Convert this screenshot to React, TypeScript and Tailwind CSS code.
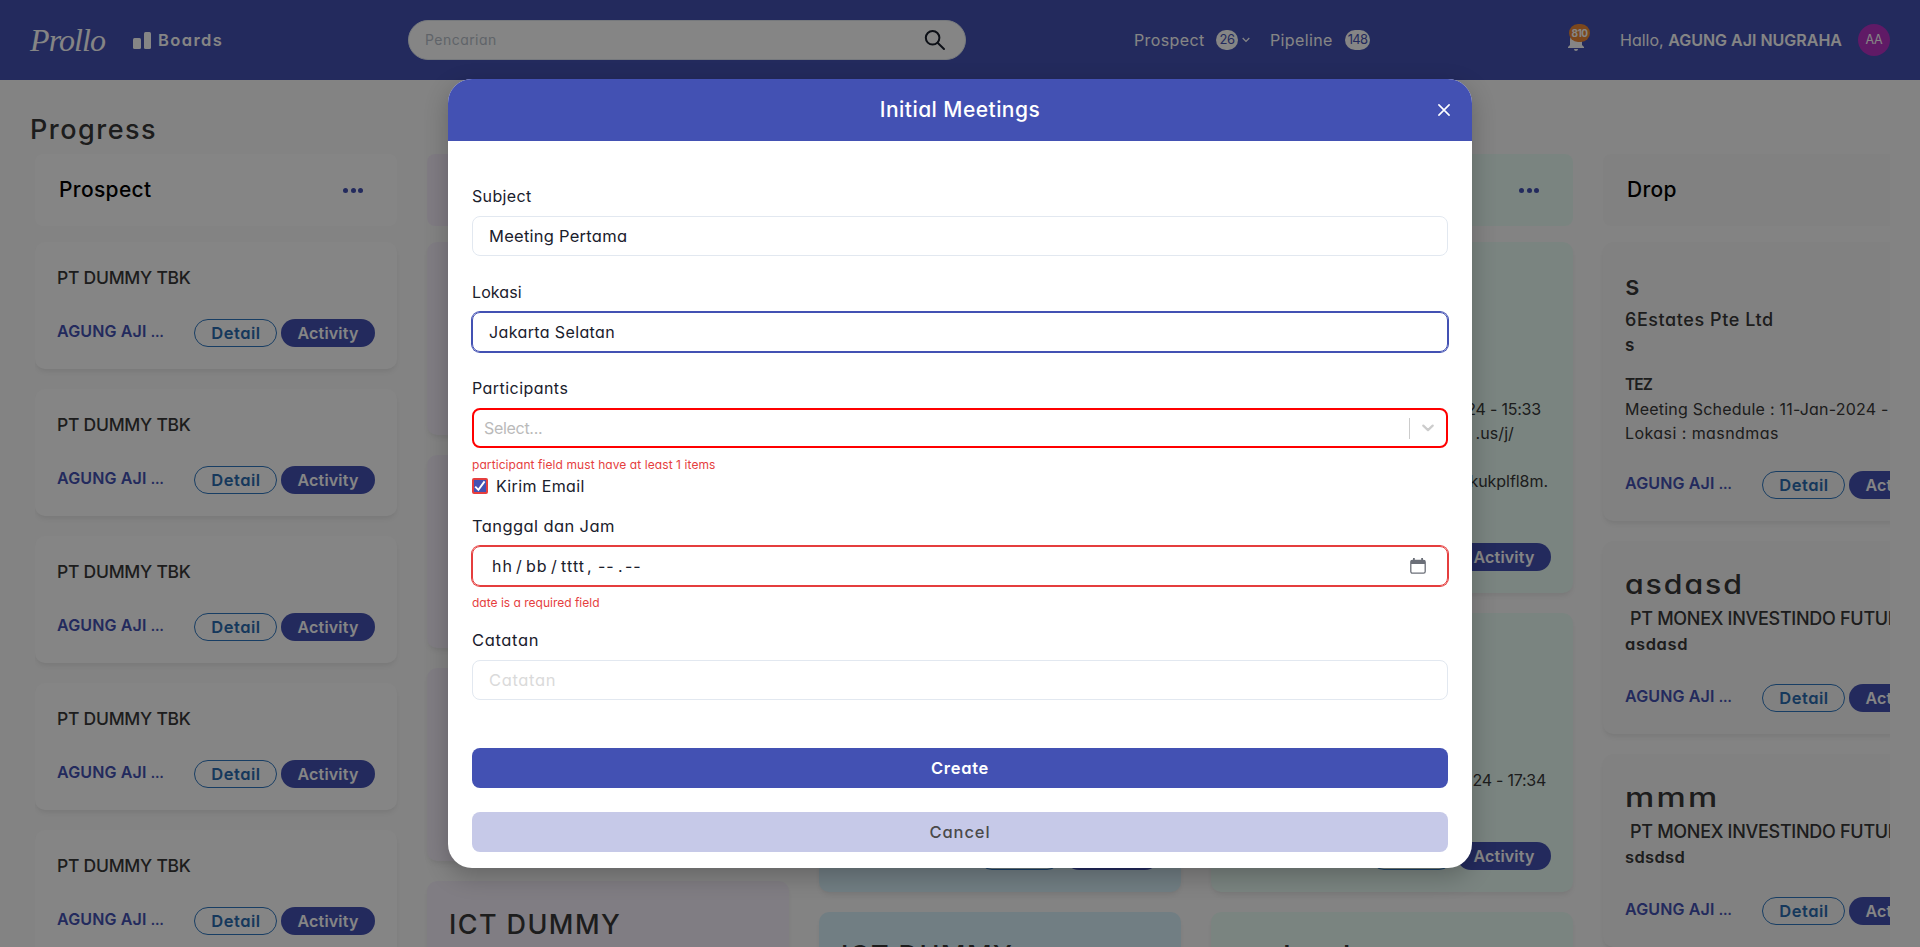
import type { ReactNode } from "react";
import { MdNotifications } from "react-icons/md";

function Actions({ className = "" }: { className?: string }) {
  return (
    <div className={`flex h-7 w-[318px] shrink-0 items-start ${className}`}>
      <p className="w-[137px] text-base leading-6 font-semibold tracking-[0.14px] text-[#4351b3]">
        AGUNG AJI <span className="text-[13px] font-bold tracking-[-0.5px]">…</span>
      </p>
      <div className="flex shrink-0 gap-1">
        <span className="flex h-7 w-[83px] items-center justify-center rounded-full border border-[#2f77c0] pl-px text-[16.5px] font-semibold tracking-[0.5px] text-[#2b6cb0]">
          Detail
        </span>
        <span className="flex h-7 w-[94px] items-center justify-center rounded-full bg-[#4351b3] text-base font-semibold tracking-[0.18px] text-white">
          Activity
        </span>
      </div>
    </div>
  );
}

function Card({ className, children }: { className: string; children?: ReactNode }) {
  return (
    <div
      className={`flex w-[362px] shrink-0 flex-col rounded-[10px] p-[22px] shadow-[0_4px_6px_-1px_rgba(0,0,0,0.07),0_2px_4px_-1px_rgba(0,0,0,0.03)] ${className}`}
    >
      {children}
    </div>
  );
}

function Column({
  title,
  tone,
  children,
}: {
  title?: string;
  tone: string;
  children: ReactNode;
}) {
  return (
    <section className="flex w-[362px] shrink-0 flex-col">
      <header
        className={`mb-4 flex h-[72px] items-center justify-between rounded-lg pr-[34px] pl-6 ${tone}`}
      >
        <h2 className="text-[21px] font-medium tracking-[0.35px] text-black">{title}</h2>
        <span className="flex gap-[2.5px]">
          <i className="size-[5px] rounded-full bg-[#4351b3]" />
          <i className="size-[5px] rounded-full bg-[#4351b3]" />
          <i className="size-[5px] rounded-full bg-[#4351b3]" />
        </span>
      </header>
      <div className="flex flex-col gap-5">{children}</div>
    </section>
  );
}

function BigTitle({ children, className = "tracking-[1.4px]" }: { children: string; className?: string }) {
  return (
    <h3 className={`h-[42px] pt-px text-[27px] leading-[42px] font-medium whitespace-nowrap ${className}`}>
      {children}
    </h3>
  );
}

function Navbar() {
  return (
    <nav className="flex h-20 shrink-0 items-center bg-[#4351b3] pr-[30px] pl-[30px] text-white">
      <div className="flex w-[378px] items-center">
        <span className="w-[103px] font-['Liberation_Serif',serif] text-[32px] leading-none tracking-[-0.9px] italic">
          Prollo
        </span>
        <span className="flex items-end gap-[3px]">
          <i className="h-[11px] w-[7.5px] rounded-[1.5px] bg-white" />
          <i className="h-[17px] w-[7.5px] rounded-[1.5px] bg-white" />
        </span>
        <span className="ml-[7px] text-[16.5px] font-semibold tracking-[1.4px]">Boards</span>
      </div>
      <div className="flex h-10 w-[558px] items-center justify-between rounded-full border border-[#e2e8f0] bg-white pr-[19px] pl-4">
        <span className="text-sm tracking-[0.46px] text-[#b8bfca]">Pencarian</span>
        <svg width="22" height="22" viewBox="0 0 22 22" fill="none" stroke="#1a202c" strokeWidth="2" strokeLinecap="round">
          <circle cx="8.6" cy="8.8" r="6.8" />
          <path d="M13.6 13.8 20 20" />
        </svg>
      </div>
      <div className="ml-[168px] flex items-center">
        <span className="w-[82px] text-base tracking-[0.39px]">Prospect</span>
        <span className="flex h-5 w-[22px] items-center justify-center rounded-full bg-white text-[13px] tracking-[-0.4px] text-[#4351b3]">
          26
        </span>
        <svg className="ml-1 w-2" viewBox="0 0 8 6" fill="none" stroke="currentColor" strokeWidth="1.3">
          <path d="M.7 1 4 4.4 7.3 1" />
        </svg>
        <span className="ml-[20px] w-[75px] text-base tracking-[0.37px]">Pipeline</span>
        <span className="flex h-5 w-[25px] items-center justify-center rounded-full bg-white text-[13px] tracking-[-0.7px] text-[#4351b3]">
          148
        </span>
      </div>
      <div className="ml-auto flex items-center">
        <span className="relative mr-[32px] h-8 w-6 pt-[5px]">
          <MdNotifications size={24} />
          <b className="absolute top-0 left-[5px] flex h-[17.5px] w-[21px] items-center justify-center rounded-full bg-[#ed8936] text-[10px] leading-none font-bold tracking-[-0.5px]">
            810
          </b>
        </span>
        <span className="text-base">
          Hallo, <b className="font-semibold">AGUNG AJI NUGRAHA</b>
        </span>
        <span className="ml-4 flex size-8 items-center justify-center rounded-full bg-[#b832c4] text-[12.5px] tracking-[-0.3px]">
          AA
        </span>
      </div>
    </nav>
  );
}

const prospects = [0, 1, 2, 3, 4];

function Board() {
  return (
    <main className="flex flex-col overflow-hidden text-[#383838]">
      <h1 className="mt-[30px] ml-[30px] h-10 text-[27px] leading-10 font-medium tracking-[1.5px]">Progress</h1>
      <div className="mt-[4px] mr-[30px] ml-[35px] flex h-[793px] items-start gap-[30px] overflow-x-clip">
        <Column title="Prospect" tone="bg-white">
          {prospects.map((id) => (
            <Card key={id} className="h-[127px] bg-white">
              <p className="mb-7 h-[27px] text-[17.5px] leading-[27px] font-medium tracking-[-0.25px]">PT DUMMY TBK</p>
              <Actions />
            </Card>
          ))}
        </Column>
        <Column tone="bg-[#f5eefc]">
          <Card className="h-[193px] bg-[#f5f0fb]" />
          <Card className="h-[193px] bg-[#f5f0fb]" />
          <Card className="h-[193px] bg-[#f5f0fb]" />
          <Card className="h-[193px] bg-[#f5f0fb]">
            <BigTitle>ICT DUMMY</BigTitle>
          </Card>
        </Column>
        <Column tone="bg-[#d9f1fb]">
          <Card className="h-[351px] bg-[#d9f1fb]" />
          <Card className="h-[279px] justify-end bg-[#d9f1fb]">
            <Actions />
          </Card>
          <Card className="h-[193px] bg-[#d9f1fb]">
            <BigTitle>ICT DUMMY</BigTitle>
          </Card>
        </Column>
        <Column tone="bg-[#eafdf5]">
          <Card className="h-[351px] justify-end bg-[#eafdf5]">
            <div className="mb-[50px] text-base leading-6 tracking-[-0.2px]">
              <p className="w-[308px] text-right">24 - 15:33</p>
              <p className="w-[281px] text-right tracking-[0.1px]">.us/j/</p>
              <p className="mt-6 w-[315px] text-right tracking-[-0.05px]">kukplfl8m.</p>
            </div>
            <Actions />
          </Card>
          <Card className="h-[279px] justify-end bg-[#eafdf5]">
            <p className="mb-[50px] w-[313px] text-right text-base leading-6 tracking-[-0.25px]">24 - 17:34</p>
            <Actions />
          </Card>
          <Card className="h-[193px] bg-[#eafdf5]">
            <BigTitle className="w-fit origin-left scale-x-[1.12] tracking-[1.8px]">asdasd</BigTitle>
          </Card>
        </Column>
        <Column title="Drop" tone="bg-[#f7f7f7]">
          <Card className="h-[279px] bg-[#f7f7f7]">
            <BigTitle>s</BigTitle>
            <p className="text-lg leading-[27px] font-medium tracking-[0.56px]">6Estates Pte Ltd</p>
            <p className="text-[17px] leading-6 font-semibold">s</p>
            <p className="mt-4 text-[15.5px] leading-6 font-semibold tracking-[-0.9px]">TEZ</p>
            <p className="text-base leading-6 tracking-[0.22px] whitespace-nowrap">Meeting Schedule : 11-Jan-2024 -</p>
            <p className="mb-[26px] text-base leading-6 tracking-[0.43px]">Lokasi : masndmas</p>
            <Actions />
          </Card>
          <Card className="h-[193px] bg-[#f7f7f7]">
            <BigTitle className="w-fit origin-left scale-x-[1.12] tracking-[1.7px]">asdasd</BigTitle>
            <p className="ml-[5px] text-lg leading-[27px] font-medium tracking-[-0.29px] whitespace-nowrap">
              PT MONEX INVESTINDO FUTURES
            </p>
            <p className="mb-7 text-[16.5px] leading-6 font-semibold tracking-[0.65px]">asdasd</p>
            <Actions />
          </Card>
          <Card className="h-[193px] bg-[#f7f7f7]">
            <BigTitle className="w-fit origin-left scale-x-[1.22] tracking-[1.8px]">mmm</BigTitle>
            <p className="ml-[5px] text-lg leading-[27px] font-medium tracking-[-0.29px] whitespace-nowrap">
              PT MONEX INVESTINDO FUTURES
            </p>
            <p className="mb-7 text-[16.5px] leading-6 font-semibold tracking-[0.35px]">sdsdsd</p>
            <Actions />
          </Card>
        </Column>
      </div>
    </main>
  );
}

function MeetingDialog() {
  return (
    <div className="flex h-[789px] w-[1024px] flex-col overflow-hidden rounded-3xl bg-white text-base text-[#1a202c] shadow-[0_8px_24px_rgba(0,0,0,0.24)]">
      <header className="flex h-[62px] shrink-0 items-center bg-[#4351b3] text-white">
        <h2 className="ml-14 flex-1 text-center text-[21px] font-medium tracking-[0.45px]">Initial Meetings</h2>
        <svg className="mr-[22px] ml-[22px] size-3" viewBox="0 0 12 12" stroke="currentColor" strokeWidth="1.6" strokeLinecap="round">
          <path d="M.9.9 11.1 11.1M11.1.9.9 11.1" />
        </svg>
      </header>
      <div className="flex flex-col px-6 pt-[43px]">
        <label className="leading-6 tracking-[0.35px]">Subject</label>
        <div className="mt-2 flex h-10 items-center rounded-lg border border-[#e2e8f0] px-4 text-[16.5px] tracking-[0.25px]">
          Meeting Pertama
        </div>
        <label className="mt-6 leading-6 tracking-[0.1px]">Lokasi</label>
        <div className="mt-2 flex h-10 items-center rounded-lg border border-[#4351b3] px-4 tracking-[0.38px] shadow-[0_0_0_1px_#4351b3]">
          Jakarta Selatan
        </div>
        <label className="mt-6 leading-6 tracking-[0.45px]">Participants</label>
        <div className="mt-2 flex h-10 items-center rounded-lg border-2 border-[#ff0000] pr-[12px] pl-[10px]">
          <span className="flex-1 tracking-[-0.3px] text-[#bababa]">Select...</span>
          <i className="h-[21px] w-px bg-[#cccccc]" />
          <svg className="ml-3 h-2 w-[12px]" viewBox="0 0 12 8" fill="none" stroke="#cccccc" strokeWidth="2.2" strokeLinecap="round" strokeLinejoin="round">
            <path d="M1.3 1.6 6 6.1l4.7-4.5" />
          </svg>
        </div>
        <p className="mt-2 text-xs leading-[18px] tracking-[0.08px] text-[#e53e3e]">
          participant field must have at least 1 items
        </p>
        <div className="flex h-6 items-center gap-2">
          <span className="flex size-4 items-center justify-center rounded-[2px] border-2 border-[#e53e3e] bg-[#4351b3]">
            <svg className="size-3" viewBox="0 0 12 12" fill="none" stroke="white" strokeWidth="1.9">
              <path d="M1.2 6.6 4.4 9.8 10.6 1.4" />
            </svg>
          </span>
          <span className="leading-6 tracking-[0.36px]">Kirim Email</span>
        </div>
        <label className="mt-4 text-[16.5px] leading-6 tracking-[0.4px]">Tanggal dan Jam</label>
        <div className="mt-2 flex h-10 items-center rounded-lg border border-[#e53e3e] pr-[21px] pl-[19px] shadow-[0_0_0_1px_#e53e3e]">
          <span className="w-[24px] tracking-[1px]">hh</span>
          <span className="w-[10px]">/</span>
          <span className="w-[25px] tracking-[1px]">bb</span>
          <span className="w-[10px]">/</span>
          <span className="w-[26px] tracking-[1.1px]">tttt</span>
          <span className="w-[11px]">,</span>
          <span className="w-[20px] tracking-[1px]">--</span>
          <span className="w-[7px]">.</span>
          <span className="flex-1 tracking-[1px]">--</span>
          <svg className="size-4" viewBox="0 0 16 16" fill="none">
            <rect x="0.8" y="2.3" width="14.4" height="12.9" rx="1.6" stroke="#6b6f78" strokeWidth="1.3" />
            <path d="M1 2h14v4H1z" fill="#6b6f78" />
            <path d="M3 0h1.8v2.4H3zM11.2 0H13v2.4h-1.8z" fill="#6b6f78" />
          </svg>
        </div>
        <p className="mt-2 text-xs leading-[18px] text-[#e53e3e]">date is a required field</p>
        <label className="mt-4 text-[16.5px] leading-6 tracking-[0.65px]">Catatan</label>
        <div className="mt-2 flex h-10 items-center rounded-lg border border-[#e2e8f0] px-4 text-[16.5px] tracking-[0.65px] text-[#dadada]">
          Catatan
        </div>
        <button className="mt-12 h-10 rounded-lg bg-[#4351b3] text-[16.5px] font-semibold tracking-[0.7px] text-white">Create</button>
        <button className="mt-6 h-10 rounded-lg bg-[#c6c9e8] text-[16.5px] font-medium tracking-[0.9px] text-[#4a4a4a]">Cancel</button>
      </div>
    </div>
  );
}

export default function App() {
  return (
    <div className="relative flex h-[947px] w-[1920px] flex-col overflow-hidden bg-[#fcfcfc] font-['Inter',sans-serif] [font-feature-settings:'cv11']">
      <Navbar />
      <Board />
      <div className="absolute inset-0 flex items-start justify-center bg-black/48 pt-[79px]">
        <MeetingDialog />
      </div>
    </div>
  );
}
